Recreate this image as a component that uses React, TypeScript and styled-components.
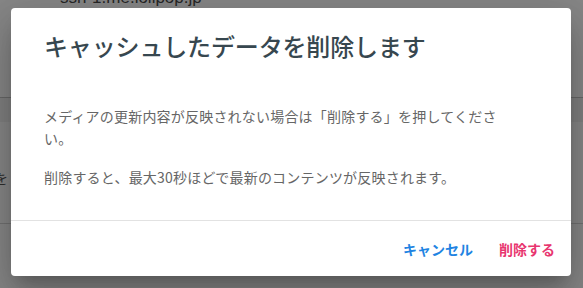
import React from "react";
import styled, { createGlobalStyle } from "styled-components";

const Global = createGlobalStyle`
  html, body { margin: 0; padding: 0; }
  body {
    width: 583px;
    height: 288px;
    overflow: hidden;
    background: #fff;
    font-family: "Noto Sans CJK JP", "Noto Sans", sans-serif;
  }
`;

const Page = styled.div`
  position: relative;
  width: 583px;
  height: 288px;
  overflow: hidden;
  background: #fff;
`;

const Backdrop = styled.div`
  display: flex;
  flex-direction: column;
`;

const HeaderRow = styled.div`
  height: 98px;
  border-bottom: 1px solid #c4c4c4;
  padding-left: 60px;
  box-sizing: border-box;
`;

const HostText = styled.div`
  margin-top: -12px;
  font-family: "Liberation Sans", Arial, sans-serif;
  font-size: 17px;
  line-height: 20px;
  color: #4a4a4a;
`;

const BandRow = styled.div`
  height: 24px;
  background: #f3f3f3;
`;

const ItemRow = styled.div`
  height: 102px;
  border-bottom: 1px solid #d8d8d8;
  display: flex;
  align-items: center;
  padding-top: 10px;
  box-sizing: border-box;
`;

const ItemText = styled.span`
  margin-left: -6px;
  font-size: 14px;
  color: #555;
`;

const Overlay = styled.div`
  position: absolute;
  inset: 0;
  background: rgba(0, 0, 0, 0.47);
`;

const Dialog = styled.div`
  position: absolute;
  left: 11px;
  top: 8px;
  width: 560px;
  height: 268px;
  background: #fff;
  border-radius: 4px;
  display: flex;
  flex-direction: column;
  box-shadow: 0 11px 15px -7px rgba(0, 0, 0, 0.2),
    0 24px 38px 3px rgba(0, 0, 0, 0.14), 0 9px 46px 8px rgba(0, 0, 0, 0.12);
`;

const Body = styled.div`
  flex: 1;
  padding: 22px 33px 0;
`;

const Title = styled.h2`
  margin: 0;
  font-size: 24px;
  line-height: 32px;
  font-weight: 500;
  color: #37474f;
  letter-spacing: -0.15px;
`;

const Content = styled.div`
  margin-top: 43px;
  width: 476px;
`;

const Para = styled.p`
  margin: 0 0 16px;
  font-size: 14px;
  line-height: 22.4px;
  letter-spacing: 0.2px;
  color: #666;
`;

const Footer = styled.div`
  height: 55px;
  border-top: 1px solid #e2e2e2;
  display: flex;
  align-items: center;
  justify-content: flex-end;
  gap: 10px;
  padding-right: 8px;
`;

const TextButton = styled.button<{ $tone: "primary" | "danger" }>`
  border: none;
  background: none;
  padding: 6px 8px;
  font-family: "Noto Sans CJK JP", "Noto Sans", sans-serif;
  font-size: 14px;
  line-height: 20px;
  font-weight: 700;
  cursor: pointer;
  color: ${(p) => (p.$tone === "primary" ? "#1f84e2" : "#e8366f")};
`;

export default function App() {
  return (
    <Page>
      <Global />
      <Backdrop>
        <HeaderRow>
          <HostText>ssh-1.me.lolipop.jp</HostText>
        </HeaderRow>
        <BandRow />
        <ItemRow>
          <ItemText>を</ItemText>
        </ItemRow>
      </Backdrop>
      <Overlay />
      <Dialog role="dialog">
        <Body>
          <Title>キャッシュしたデータを削除します</Title>
          <Content>
            <Para>
              メディアの更新内容が反映されない場合は「削除する」を押してください。
            </Para>
            <Para>削除すると、最大30秒ほどで最新のコンテンツが反映されます。</Para>
          </Content>
        </Body>
        <Footer>
          <TextButton $tone="primary">キャンセル</TextButton>
          <TextButton $tone="danger">削除する</TextButton>
        </Footer>
      </Dialog>
    </Page>
  );
}
